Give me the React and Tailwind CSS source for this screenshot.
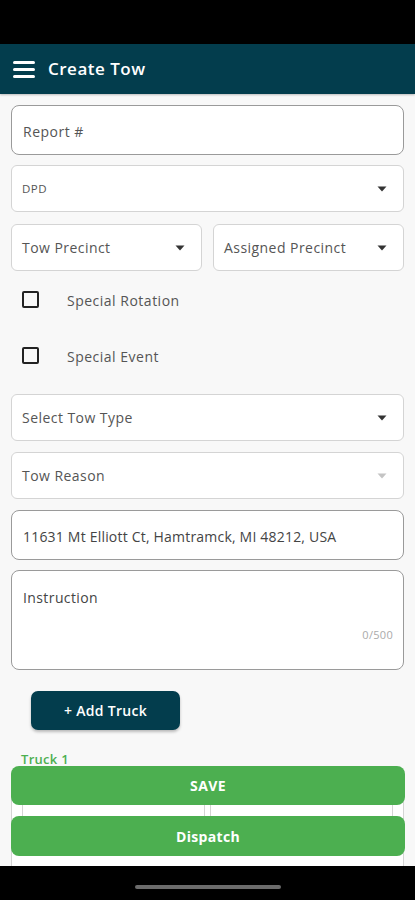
import React from "react";

const font = { fontFamily: '"Open Sans", "Liberation Sans", sans-serif' };

function Caret({ light }) {
  return (
    <svg width="10" height="6" viewBox="0 0 10 6" className="shrink-0">
      <path d="M0.5 0.5 L9.5 0.5 L5 5.5 Z" fill={light ? "#c4c4c4" : "#333"} />
    </svg>
  );
}

function Select({ label, small, light, className = "" }) {
  return (
    <div
      className={`h-[47px] bg-white border border-[#d4d4d4] rounded-[6px] flex items-center justify-between pl-[10px] pr-[16px] ${className}`}
    >
      <span className={`${small ? "text-[11.5px] tracking-[0.5px]" : "text-[14px] tracking-[0.45px]"} text-[#555]`}>{label}</span>
      <Caret light={light} />
    </div>
  );
}

function Check({ label }) {
  return (
    <div className="h-[56px] flex items-center pt-[3px]">
      <div className="ml-[11px] w-[17px] h-[17px] border-2 border-[#222] rounded-[2px] -mt-[3px]" />
      <span className="ml-[28px] text-[14px] text-[#555] tracking-[0.5px]">{label}</span>
    </div>
  );
}

export default function App() {
  return (
    <div className="relative w-[415px] h-[900px] overflow-hidden bg-[#f8f8f8]" style={font}>
      <div className="h-[44px] bg-black" />
      <div className="h-[50px] bg-[#033d4d] flex items-center shadow-[0_1px_2px_rgba(0,0,0,0.25)]">
        <div className="ml-[13px] w-[22px] flex flex-col gap-[4px]">
          <div className="h-[3px] rounded-full bg-white" />
          <div className="h-[3px] rounded-full bg-white" />
          <div className="h-[3px] rounded-full bg-white" />
        </div>
        <span className="ml-[13px] text-[17px] font-semibold text-white tracking-[0.5px]">Create Tow</span>
      </div>

      <div className="px-[11px] pt-[11px] flex flex-col">
        <div className="h-[50px] bg-white border border-[#9a9a9a] rounded-[8px] flex items-center pl-[11px] pt-[2px]">
          <span className="text-[14px] text-[#555] tracking-[0.5px]">Report #</span>
        </div>
        <Select label="DPD" small className="mt-[10px]" />
        <div className="mt-[12px] flex gap-[11px]">
          <Select label="Tow Precinct" className="flex-1" />
          <Select label="Assigned Precinct" className="flex-1" />
        </div>
        <Check label="Special Rotation" />
        <Check label="Special Event" />
        <Select label="Select Tow Type" className="mt-[11px]" />
        <Select label="Tow Reason" light className="mt-[11px]" />
        <div className="mt-[11px] h-[50px] bg-white border border-[#9a9a9a] rounded-[8px] flex items-center pl-[11px] pt-[2px]">
          <span className="text-[14px] text-[#444] tracking-[0.2px]">11631 Mt Elliott Ct, Hamtramck, MI 48212, USA</span>
        </div>
        <div className="mt-[10px] h-[100px] bg-white border border-[#9a9a9a] rounded-[8px] relative flex flex-col pl-[11px] pr-[10px] pt-[16px]">
          <span className="text-[14px] text-[#444] tracking-[0.4px]">Instruction</span>
          <span className="mt-auto mb-[26px] self-end text-[11px] text-[#aaa] tracking-[0.3px]">0/500</span>
        </div>
        <button className="mt-[21px] ml-[20px] w-[149px] h-[39px] rounded-[7px] bg-[#033d4d] text-white text-[14px] font-semibold tracking-[0.3px] shadow-[0_2px_3px_rgba(0,0,0,0.25)]">
          + Add Truck
        </button>
        <div className="mt-[21px] pl-[10px] text-[13px] font-semibold text-[#4caf50] leading-[16px] tracking-[0.3px]">Truck 1</div>
        <div className="mt-[2px] h-[120px] bg-white border border-[#d4d4d4] rounded-[6px] flex gap-[5px] px-[10px] pt-[6px]">
          <div className="flex-1 h-[50px] border border-[#d4d4d4] rounded-[4px]" />
          <div className="flex-1 h-[50px] border border-[#d4d4d4] rounded-[4px]" />
        </div>
      </div>

      <div className="absolute left-[11px] right-[10px] top-[766px] flex flex-col gap-[11px]">
        <button className="h-[39px] rounded-[8px] bg-[#4caf50] text-white text-[14px] font-bold tracking-[0.4px]">SAVE</button>
        <button className="h-[40px] rounded-[8px] bg-[#4caf50] text-white text-[14px] font-bold tracking-[0.3px]">Dispatch</button>
      </div>

      <div className="absolute left-0 right-0 bottom-0 h-[34px] bg-black flex items-center justify-center">
        <div className="w-[146px] h-[4px] rounded-full bg-[#6b6b6b] mt-[8px]" />
      </div>
    </div>
  );
}
